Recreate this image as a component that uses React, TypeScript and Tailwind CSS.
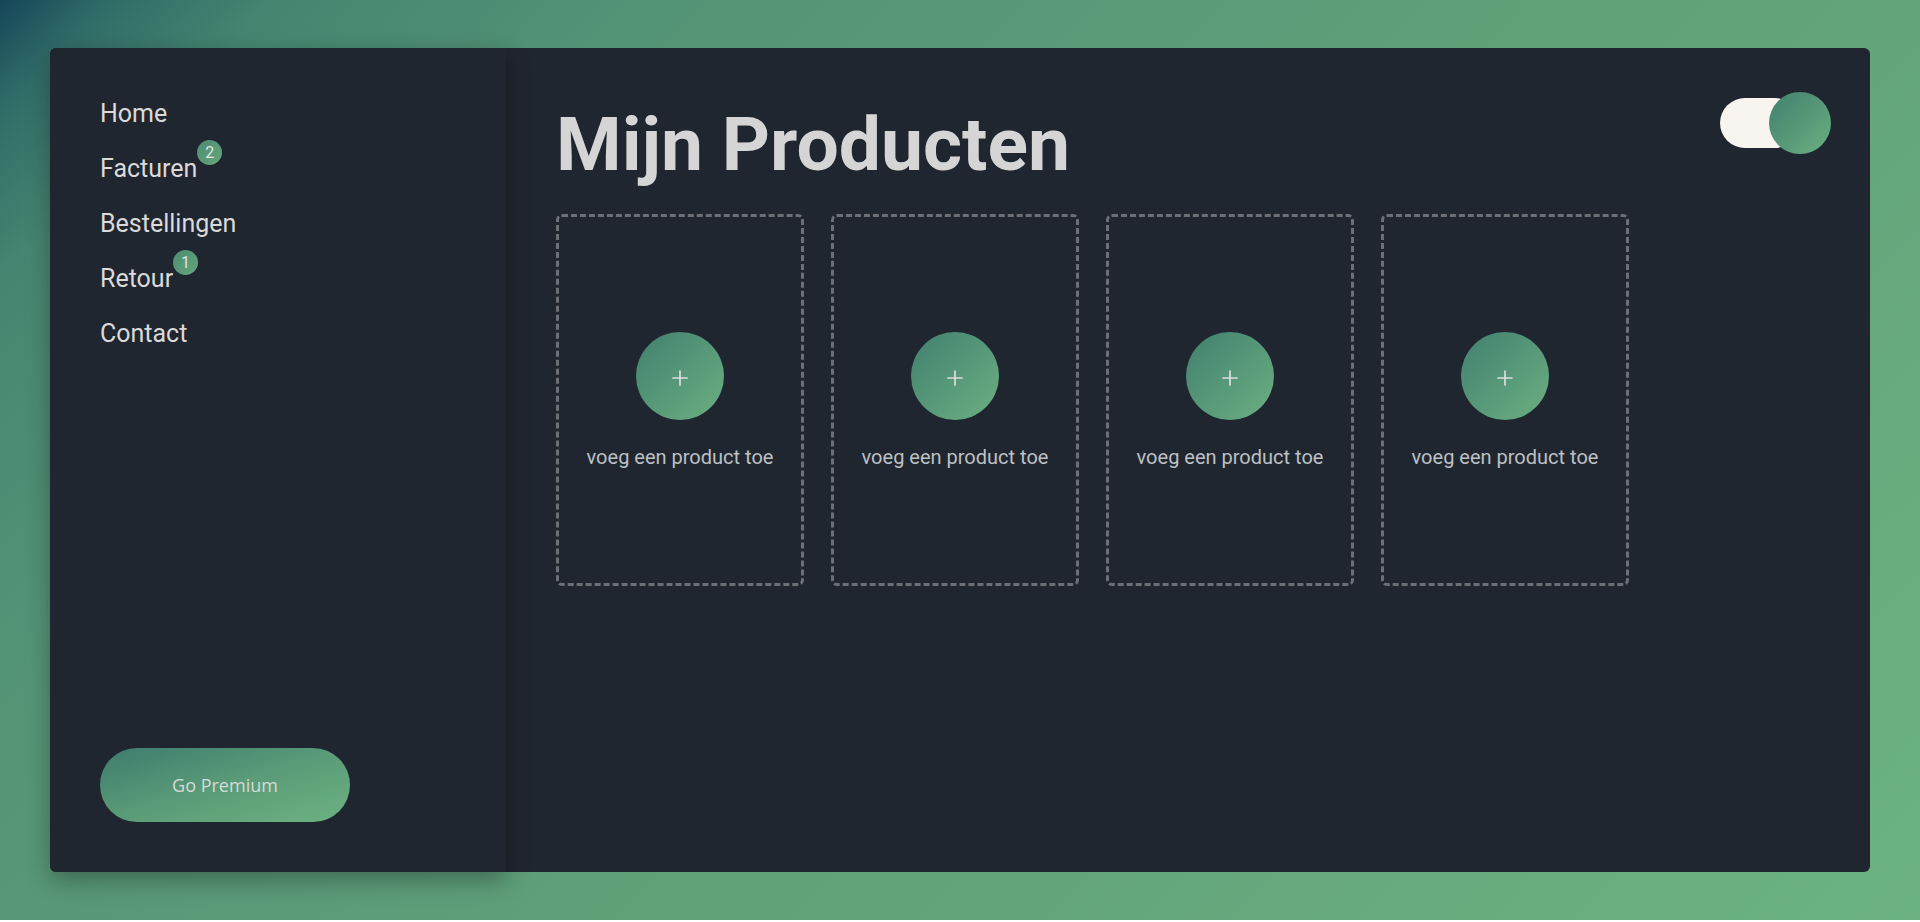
import { Plus } from 'lucide-react'

const navItems = [
  { label: 'Home' },
  { label: 'Facturen', badge: 2 },
  { label: 'Bestellingen' },
  { label: 'Retour', badge: 1 },
  { label: 'Contact' },
]

function ProductSlot() {
  return (
    <div className="w-[248px] h-[372px] pt-[4px] rounded-md border-[3px] border-dashed border-[#6c6f75] flex flex-col items-center justify-center">
      <button className="w-[88px] h-[88px] rounded-full bg-gradient-to-br from-[#41806f] to-[#6cb081] flex items-center justify-center">
        <Plus className="w-[24px] h-[24px] text-[#dedede] mt-[3px]" strokeWidth={1.7} />
      </button>
      <p className="mt-[22px] text-[20px] leading-[30px] text-[#bcc0c4]">voeg een product toe</p>
    </div>
  )
}

export default function App() {
  return (
    <div className="h-[920px] w-full flex justify-center pt-[48px] font-['Roboto',sans-serif] bg-[linear-gradient(135deg,#164659_0%,#316d68_4%,#468671_10%,#559576_25%,#62a27a_60%,#6db280_100%)]">
      <div className="w-[1820px] h-[824px] bg-[#20262f] rounded-md flex">
        {/* Sidebar */}
        <aside className="w-[456px] shrink-0 bg-[#20262f] rounded-l-md shadow-[0_8px_24px_rgba(0,0,0,0.32)] flex flex-col justify-between pl-[50px] pt-[47px] pb-[50px]">
          <nav className="flex flex-col gap-[18px]">
            {navItems.map((item) => (
              <a key={item.label} href="#" className="self-start flex items-start text-[25px] leading-[37px] text-[#dadada]">
                <span>{item.label}</span>
                {item.badge && (
                  <span className="-mt-[10px] w-[25px] h-[25px] rounded-full bg-gradient-to-br from-[#4c8c73] to-[#65a77c] text-[16px] leading-none text-[#dfe6e1] flex items-center justify-center">
                    {item.badge}
                  </span>
                )}
              </a>
            ))}
          </nav>
          <button className="w-[250px] h-[74px] rounded-full bg-gradient-to-br from-[#3d7c6d] via-[#5a9b78] to-[#6db281] text-[18px] text-[#d6dad6] font-['Open_Sans',sans-serif]">
            Go Premium
          </button>
        </aside>

        {/* Main */}
        <main className="flex-1 pl-[50px] pr-[39px] pt-[44px]">
          <div className="flex items-start justify-between">
            <h1 className="mt-[14px] text-[75px] leading-[76px] font-bold text-[#d5d5d5]">Mijn Producten</h1>
            <div className="flex items-center">
              <div className="w-[80px] h-[50px] rounded-full bg-[#f8f4ef]" />
              <div className="-ml-[31px] w-[62px] h-[62px] rounded-full bg-gradient-to-br from-[#427f6e] to-[#6bb081]" />
            </div>
          </div>
          <div className="mt-[32px] flex gap-[27px]">
            <ProductSlot />
            <ProductSlot />
            <ProductSlot />
            <ProductSlot />
          </div>
        </main>
      </div>
    </div>
  )
}
